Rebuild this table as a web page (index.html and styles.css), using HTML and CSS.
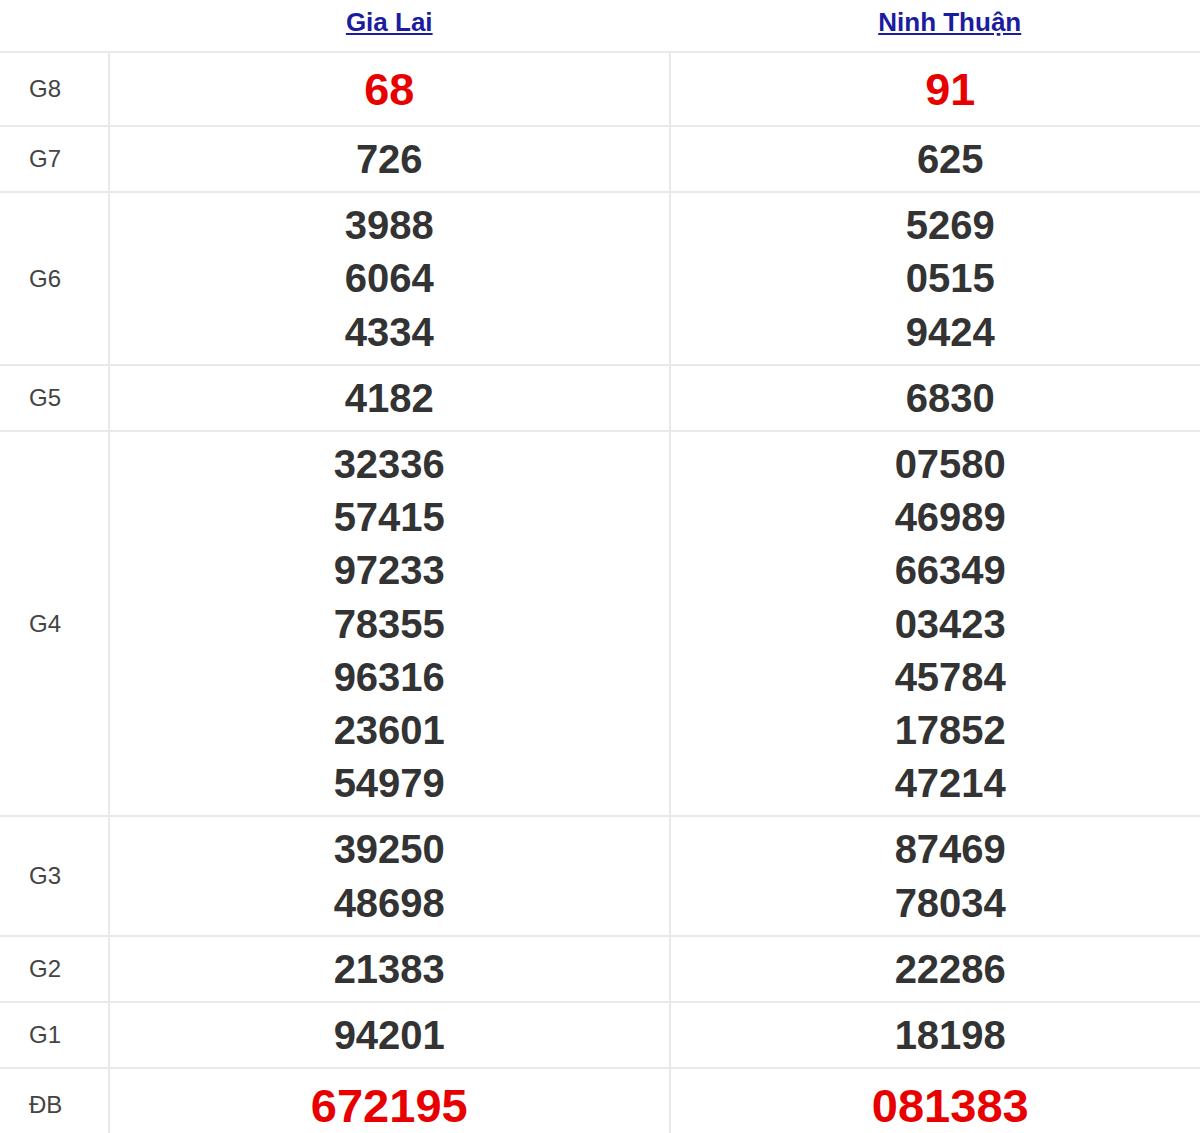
FILE: index.html
```html
<!DOCTYPE html>
<html lang="vi">
<head>
<meta charset="utf-8">
<title>Kết quả xổ số</title>
<link rel="stylesheet" href="styles.css">
</head>
<body>
<table class="kq">
  <thead>
    <tr class="head">
      <th class="lbl"></th>
      <th><a href="#" class="prov">Gia Lai</a></th>
      <th><a href="#" class="prov">Ninh Thuận</a></th>
    </tr>
  </thead>
  <tbody>
    <tr class="big">
      <td class="lbl">G8</td>
      <td class="num red g8">68</td>
      <td class="num red g8">91</td>
    </tr>
    <tr>
      <td class="lbl">G7</td>
      <td class="num">726</td>
      <td class="num">625</td>
    </tr>
    <tr>
      <td class="lbl">G6</td>
      <td class="num"><div>3988</div><div>6064</div><div>4334</div></td>
      <td class="num"><div>5269</div><div>0515</div><div>9424</div></td>
    </tr>
    <tr>
      <td class="lbl">G5</td>
      <td class="num">4182</td>
      <td class="num">6830</td>
    </tr>
    <tr>
      <td class="lbl">G4</td>
      <td class="num"><div>32336</div><div>57415</div><div>97233</div><div>78355</div><div>96316</div><div>23601</div><div>54979</div></td>
      <td class="num"><div>07580</div><div>46989</div><div>66349</div><div>03423</div><div>45784</div><div>17852</div><div>47214</div></td>
    </tr>
    <tr>
      <td class="lbl">G3</td>
      <td class="num"><div>39250</div><div>48698</div></td>
      <td class="num"><div>87469</div><div>78034</div></td>
    </tr>
    <tr>
      <td class="lbl">G2</td>
      <td class="num">21383</td>
      <td class="num">22286</td>
    </tr>
    <tr>
      <td class="lbl">G1</td>
      <td class="num">94201</td>
      <td class="num">18198</td>
    </tr>
    <tr class="big">
      <td class="lbl">ĐB</td>
      <td class="num red db">672195</td>
      <td class="num red db">081383</td>
    </tr>
  </tbody>
</table>
</body>
</html>
```
FILE: styles.css
```css
html, body {
  overflow: hidden;
}
body {
  margin: 0;
  background: #fff;
  font-family: "Liberation Sans", Arial, sans-serif;
}
.kq {
  border-collapse: collapse;
  width: 1230px;
  table-layout: fixed;
}
.kq th, .kq td {
  padding: 0;
  text-align: center;
}
.kq th.lbl, .kq td.lbl {
  width: 109px;
}
.head th {
  height: 45px;
  border-bottom: 2px solid #e9e9e9;
  vertical-align: middle;
  padding: 0 0 6px;
}
.prov {
  color: #1c1ca0;
  font-weight: bold;
  font-size: 26px;
  text-decoration: underline;
  text-underline-offset: 2px;
}
.kq td {
  border: 2px solid #e9e9e9;
  border-left: none;
  border-top: none;
  vertical-align: middle;
}
.kq td:last-child {
  border-right: none;
}
.kq td.lbl {
  text-align: left;
  padding-left: 29px;
  font-size: 24px;
  color: #444;
}
.kq td.num {
  padding: 6px 0 5px;
  font-size: 40px;
  font-weight: bold;
  color: #333;
  line-height: 53.2px;
}
.kq td.red {
  color: #e80000;
}
.kq td.g8 {
  font-size: 45px;
  line-height: 61px;
}
.kq td.db {
  font-size: 47px;
  line-height: 61px;
}
```
